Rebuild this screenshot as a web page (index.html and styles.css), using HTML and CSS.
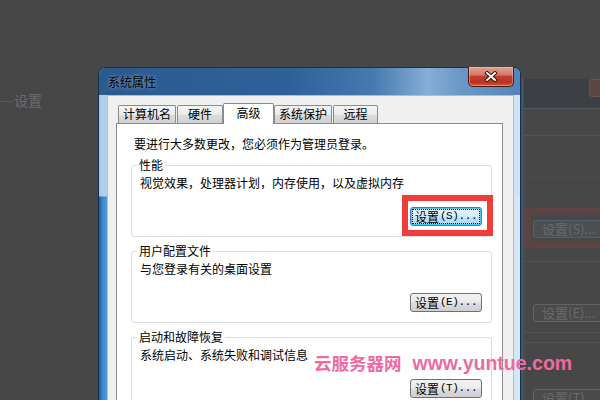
FILE: index.html
```html
<!DOCTYPE html>
<html lang="zh-CN">
<head>
<meta charset="utf-8">
<title>系统属性</title>
<link rel="stylesheet" href="styles.css">
</head>
<body>
<div class="desktop">
  <div class="bg-label">—设置</div>

  <div class="bg-right">
    <div class="bg-band"><span class="bg-close"></span></div>
    <div class="bg-row r1"></div>
    <div class="bg-row r2"></div>
    <div class="bg-gap"></div>
    <div class="bg-hl"><span class="bg-btn">设置(S)...</span></div>
    <div class="bg-row r3"></div>
    <div class="bg-row r4"><span class="bg-btn">设置(E)...</span></div>
    <div class="bg-row r5"></div>
    <div class="bg-row r6"><span class="bg-btn">设置(T)...</span></div>
  </div>

  <div class="window">
    <div class="titlebar">
      <span class="title">系统属性</span>
      <span class="close">
        <svg width="14" height="11" viewBox="0 0 14 11">
          <path d="M3 2 L11 9 M11 2 L3 9" stroke="#3a1410" stroke-width="3.8" stroke-linecap="square" fill="none"/>
          <path d="M3 2 L11 9 M11 2 L3 9" stroke="#ffffff" stroke-width="1.9" stroke-linecap="square" fill="none"/>
        </svg>
      </span>
    </div>
    <div class="client">
      <div class="tabs">
        <span class="tab t1">计算机名</span>
        <span class="tab t2">硬件</span>
        <span class="tab t3 active">高级</span>
        <span class="tab t4">系统保护</span>
        <span class="tab t5">远程</span>
      </div>
      <div class="panel">
        <p class="note">要进行大多数更改，您必须作为管理员登录。</p>

        <div class="group">
          <span class="legend">性能</span>
          <span class="desc">视觉效果，处理器计划，内存使用，以及虚拟内存</span>
          <span class="btn focused"><span class="btn-in">设置<span class="acc">(S)...</span></span></span>
        </div>

        <div class="group">
          <span class="legend">用户配置文件</span>
          <span class="desc">与您登录有关的桌面设置</span>
          <span class="btn"><span class="btn-in">设置<span class="acc">(E)...</span></span></span>
        </div>

        <div class="group g3">
          <span class="legend">启动和故障恢复</span>
          <span class="desc">系统启动、系统失败和调试信息</span>
          <span class="btn"><span class="btn-in">设置<span class="acc">(T)...</span></span></span>
        </div>
      </div>
    </div>
  </div>

  <div class="highlight"></div>
  <div class="watermark"><span class="wm-cn">云服务器网</span><span class="wm-en">www.yuntue.com</span></div>
</div>
</body>
</html>
```

FILE: styles.css
```css
html, body {
  margin: 0;
  padding: 0;
}
body {
  width: 600px;
  height: 400px;
  overflow: hidden;
  background: #474747;
  font-family: "Noto Sans CJK SC", "Liberation Sans", sans-serif;
  font-size: 12px;
  color: #000;
}
.desktop {
  position: relative;
  width: 600px;
  height: 400px;
  overflow: hidden;
  background: #474747;
}

/* dimmed background screenshot */
.bg-label {
  position: absolute;
  left: 0;
  top: 91px;
  font-size: 14px;
  line-height: 18px;
  color: #6c6c6c;
}
.bg-right {
  position: absolute;
  left: 521px;
  top: 79px;
  width: 79px;
  height: 321px;
  box-sizing: border-box;
  display: flex;
  flex-direction: column;
  border-left: 3px solid #3f5466;
}
.bg-band {
  flex: none;
  height: 29px;
  background: #3c3f44;
  border-bottom: 1px solid #55585c;
  display: flex;
  justify-content: flex-end;
  align-items: flex-start;
}
.bg-close {
  width: 10px;
  height: 16px;
  background: #5a4643;
  border-radius: 4px 0 0 4px;
  border: 1px solid #6a5652;
  border-right: 0;
}
.bg-row {
  flex: none;
  border-bottom: 1px solid #525252;
  display: flex;
  align-items: flex-end;
  padding-left: 9px;
}
.bg-row.r1 { height: 26px; }
.bg-row.r2 { height: 41px; border-bottom-color: #4e4e4e; }
.bg-gap { flex: none; height: 30px; }
.bg-hl {
  flex: none;
  height: 40px;
  border: 7px solid #5a4444;
  border-right: 0;
  box-sizing: border-box;
  padding: 5px 0 0 2px;
}
.bg-row.r3 { height: 13px; }
.bg-row.r4 { height: 60px; padding-bottom: 10px; }
.bg-row.r5 { height: 9px; }
.bg-row.r6 { height: 60px; border-bottom: 0; align-items: flex-start; padding-top: 46px; box-sizing: border-box; }
.bg-btn {
  display: block;
  flex: none;
  width: 80px;
  height: 18px;
  border: 1px solid #626262;
  border-radius: 3px;
  background: #4b4b4b;
  color: #6a6a6a;
  font-size: 13px;
  line-height: 16px;
  padding-left: 8px;
  white-space: nowrap;
  box-sizing: border-box;
}
.bg-hl .bg-btn {
  border-color: #4d6470;
  background: #4c4f52;
}

/* window */
.window {
  position: absolute;
  left: 98px;
  top: 67px;
  width: 423px;
  height: 360px;
  box-sizing: border-box;
  border: 1px solid #14304f;
  border-bottom: 0;
  border-radius: 7px 7px 0 0;
  padding: 0 6px 0 8px;
  background:
    linear-gradient(180deg, rgba(205, 224, 242, 0.8) 0, rgba(205, 224, 242, 0.8) 128px, rgba(0, 0, 0, 0) 129px),
    linear-gradient(90deg, #1e5894 0, #3a86c6 3px, #4d9ad7 8px, #6fa8d8 30%, #b9d2ea 80%, #d8e7f4 100%);
  display: flex;
  flex-direction: column;
}
.titlebar {
  height: 27px;
  margin: 0 -6px 0 -8px;
  padding: 0 6px 0 9px;
  border-radius: 6px 6px 0 0;
  background: linear-gradient(90deg, #2b5a8d 0%, #2f6199 45%, #4679ae 65%, #86aed6 78%, #6a98c6 86%, #5584b8 100%);
  display: flex;
  justify-content: space-between;
  align-items: flex-start;
}
.title {
  line-height: 16px;
  margin-top: 6px;
  font-size: 12px;
  color: #000;
  text-shadow: 0 0 4px rgba(255, 255, 255, 0.55);
}
.close {
  width: 46px;
  height: 20px;
  margin-top: -1px;
  box-sizing: border-box;
  border: 1px solid #4a1a14;
  border-top: 0;
  border-radius: 0 0 5px 5px;
  background: linear-gradient(180deg, #e2a091 0%, #d27c6c 40%, #c1402e 50%, #b8321f 80%, #d05a3e 100%);
  box-shadow: inset 0 0 0 1px rgba(255, 200, 190, 0.45);
  display: flex;
  align-items: center;
  justify-content: center;
}
.close svg {
  display: block;
}

.client {
  flex: 1;
  background: #f0f0f0;
  border: 1px solid #a7bfd7;
  border-bottom: 0;
  padding: 7px 10px 0 8px;
  display: flex;
  flex-direction: column;
}
.tabs {
  display: flex;
  align-items: flex-end;
  margin-left: 2px;
  height: 20px;
  position: relative;
  z-index: 2;
}
.tab {
  box-sizing: border-box;
  height: 18px;
  border: 1px solid #898c95;
  border-bottom: 0;
  border-radius: 2px 2px 0 0;
  background: linear-gradient(180deg, #f4f4f4 0%, #ebebeb 50%, #dcdcdc 51%, #d2d2d2 100%);
  text-align: center;
  line-height: 16px;
  white-space: nowrap;
}
.tab.t1 { width: 58px; margin-right: 1px; }
.tab.t2 { width: 46px; }
.tab.t3 { width: 51px; }
.tab.t4 { width: 58px; margin-right: 1px; }
.tab.t5 { width: 45px; }
.tab.active {
  height: 21px;
  margin-bottom: -1px;
  background: #fff;
  padding-top: 1px;
}
.panel {
  flex: 1;
  background: #fff;
  border: 1px solid #898c95;
  border-bottom: 0;
  padding: 12px 10px 0 14px;
  display: flex;
  flex-direction: column;
}
.note {
  margin: 0 0 13px 3px;
  line-height: 16px;
}
.group {
  border: 1px solid #d5dfe5;
  border-radius: 3px;
  padding: 0 9px 10px 8px;
  display: flex;
  flex-direction: column;
  margin-bottom: 14px;
}
.legend {
  align-self: flex-start;
  margin: -9px 0 0 -3px;
  padding: 0 2px;
  background: #fff;
  line-height: 16px;
}
.desc {
  margin-top: 2px;
  line-height: 16px;
}
.btn {
  align-self: flex-end;
  margin-top: 16px;
  width: 72px;
  height: 19px;
  box-sizing: border-box;
  border: 1px solid #707070;
  border-radius: 3px;
  background: linear-gradient(180deg, #f2f2f2 0%, #ebebeb 48%, #dddddd 52%, #cfcfcf 100%);
  display: flex;
  align-items: center;
  justify-content: center;
  padding: 1px;
}
.btn-in {
  display: flex;
  align-items: center;
  justify-content: center;
  width: 100%;
  height: 100%;
  box-sizing: border-box;
  line-height: 15px;
  white-space: nowrap;
}
.btn.focused {
  border-color: #3c7fb1;
  background: linear-gradient(180deg, #eaf6fd 0%, #d9f0fc 48%, #bee6fd 52%, #a7d9f5 100%);
  box-shadow: inset 0 0 0 1px #49c8f5;
}
.btn.focused .btn-in {
  outline: 1px dotted #000;
  outline-offset: -1px;
}
.acc {
  font-family: "Liberation Mono", monospace;
  font-size: 11px;
  letter-spacing: -0.4px;
  margin-left: 1px;
}

/* annotation overlays */
.highlight {
  position: absolute;
  left: 402px;
  top: 195px;
  width: 91px;
  height: 41px;
  box-sizing: border-box;
  border: 6px solid #f23c3c;
}
.watermark {
  position: absolute;
  left: 314px;
  top: 353px;
  color: #ef69a3;
  font-weight: bold;
  line-height: 20px;
  white-space: nowrap;
  display: flex;
  align-items: baseline;
}
.wm-cn {
  font-family: "Noto Sans CJK SC", sans-serif;
  font-size: 17.5px;
  margin-right: 11px;
}
.wm-en {
  font-family: "Liberation Sans", sans-serif;
  font-size: 19.5px;
}
```
